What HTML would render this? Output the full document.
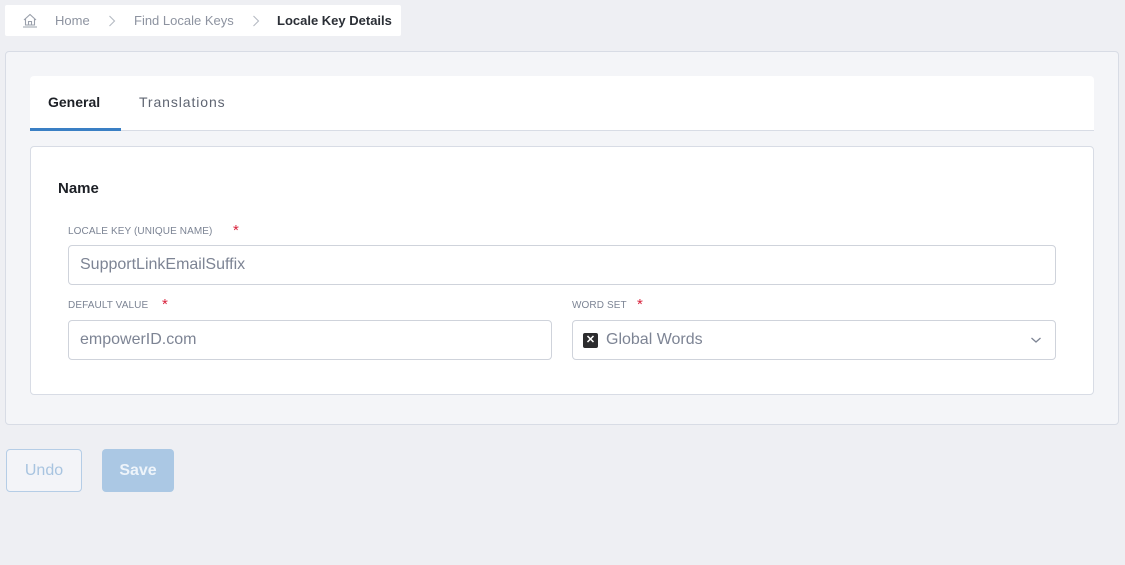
<!DOCTYPE html>
<html><head><style>
*{box-sizing:border-box;margin:0;padding:0}
body{width:1125px;height:565px;background:#eeeff3;font-family:"Liberation Sans",sans-serif;position:relative;overflow:hidden}
.a{position:absolute}
.bc{left:5px;top:5px;width:396px;height:31px;background:#fff;border-radius:2px;font-size:13px;color:#8d93a0}
.bc span{position:absolute;top:8px}
.panel{left:5px;top:51px;width:1114px;height:374px;background:#f4f5f8;border:1px solid #d8dce5;border-radius:4px}
.tabs{left:30px;top:76px;width:1064px;height:55px;background:#fff;border-bottom:1px solid #d8dce5;border-radius:4px 4px 0 0}
.card{left:30px;top:146px;width:1064px;height:249px;background:#fff;border:1px solid #d8dce5;border-radius:4px}
.lbl{font-size:10px;color:#7c8494;letter-spacing:.1px}
.req{color:#d8213b;font-size:15px}
.inp{background:#fff;border:1px solid #cfd3db;border-radius:4px;height:40px;font-size:16px;color:#7d8494;padding:10px 0 0 11px}
</style></head><body>
<div class="a bc">
<svg class="a" style="left:17px;top:7px" width="16" height="16" viewBox="0 0 16 16" fill="none" stroke="#9aa0ab" stroke-width="1.1"><path d="M2 8L8 2.5 14 8M3.5 6.8V13H12.5V6.8M6.5 13V9.5H9.5V13M1 15H15"/></svg>
<span style="left:50px">Home</span>
<svg class="a" style="left:103px;top:10px" width="8" height="12" viewBox="0 0 8 12" fill="none" stroke="#b5bac3" stroke-width="1.1"><path d="M1.5 1L6.5 6 1.5 11"/></svg>
<span style="left:129px">Find Locale Keys</span>
<svg class="a" style="left:247px;top:10px" width="8" height="12" viewBox="0 0 8 12" fill="none" stroke="#b5bac3" stroke-width="1.1"><path d="M1.5 1L6.5 6 1.5 11"/></svg>
<span style="left:272px;color:#2b2f36;font-weight:bold">Locale Key Details</span>
</div>
<div class="a panel"></div>
<div class="a tabs">
<div class="a" style="left:18px;top:18px;font-size:14px;font-weight:bold;color:#1d2026">General</div>
<div class="a" style="left:0;top:52px;width:91px;height:3px;background:#3a7fc4"></div>
<div class="a" style="left:109px;top:18px;font-size:14px;color:#5f6572;letter-spacing:.9px">Translations</div>
</div>
<div class="a card"></div>
<div class="a" style="left:58px;top:180px;font-size:15px;font-weight:bold;color:#1d2026">Name</div>
<div class="a lbl" style="left:68px;top:226px">LOCALE KEY (UNIQUE NAME)</div>
<div class="a req" style="left:233px;top:222px">*</div>
<div class="a inp" style="left:68px;top:245px;width:988px">SupportLinkEmailSuffix</div>
<div class="a lbl" style="left:68px;top:300px">DEFAULT VALUE</div>
<div class="a req" style="left:162px;top:296px">*</div>
<div class="a inp" style="left:68px;top:320px;width:484px">empowerID.com</div>
<div class="a lbl" style="left:572px;top:300px">WORD SET</div>
<div class="a req" style="left:637px;top:296px">*</div>
<div class="a inp" style="left:572px;top:320px;width:484px;padding-left:33px">Global Words</div>
<div class="a" style="left:583px;top:333px;width:15px;height:15px;background:#2c2c2e;border-radius:2px;color:#fff;font-size:11px;font-weight:bold;text-align:center;line-height:15px">✕</div>
<svg class="a" style="left:1030px;top:335px" width="12" height="10" viewBox="0 0 12 10" fill="none" stroke="#7d8494" stroke-width="1.3"><path d="M1.5 3L6 7 10.5 3"/></svg>
<div class="a" style="left:6px;top:449px;width:76px;height:43px;border:1px solid #b5cde6;border-radius:4px;background:#f3f4f8;color:#a8c4e0;font-size:16px;text-align:center;line-height:41px">Undo</div>
<div class="a" style="left:102px;top:449px;width:72px;height:43px;border-radius:4px;background:#abc8e4;color:#eef4fa;font-size:16px;font-weight:bold;text-align:center;line-height:43px">Save</div>
</body></html>
